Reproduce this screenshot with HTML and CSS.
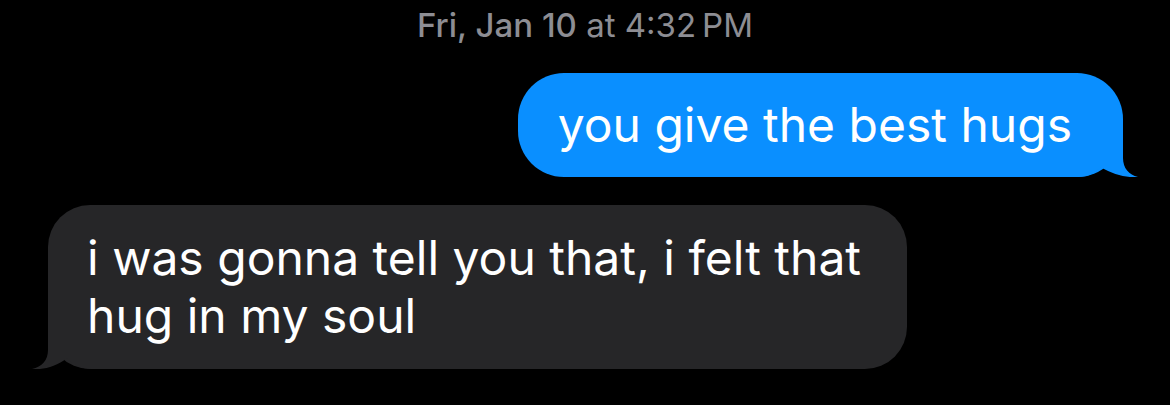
FILE: index.html
```html
<!DOCTYPE html>
<html lang="en">
<head>
  <meta charset="UTF-8">
  <meta name="viewport" content="width=device-width, initial-scale=1.0">
  <title>Messages</title>
  <link rel="stylesheet" href="styles.css">
</head>
<body>
  <div class="thread">
    <div class="timestamp"><span class="day">Fri, Jan 10</span> at 4:32&#8239;PM</div>

    <div class="row row-out">
      <div class="bubble bubble-out">
        <svg class="tail tail-out" width="60" height="50" viewBox="0 0 60 50">
          <path d="M0,0 H45 V31 C45,41 51,48 60,50 C50,51 35,48 23,40 C17,46 10,50 0,50 Z" fill="#0a8fff"/>
        </svg>
        <span class="msg">you give the best hugs</span>
      </div>
    </div>

    <div class="row row-in">
      <div class="bubble bubble-in">
        <svg class="tail tail-in" width="60" height="50" viewBox="0 0 60 50">
          <path d="M60,0 H16 V31 C16,41 10,48 0,50 C10,51 24,48 35,39 C41,46 49,50 60,50 Z" fill="#262628"/>
        </svg>
        <span class="msg">i was gonna tell you that, i felt that<br>hug in my soul</span>
      </div>
    </div>
  </div>
</body>
</html>
```

FILE: styles.css
```css
:root {
  --bg: #000000;
  --blue: #0a8fff;
  --gray-bubble: #262628;
  --meta: #8d8d93;
  --text: #ffffff;
}

* {
  margin: 0;
  padding: 0;
  box-sizing: border-box;
}

body {
  width: 1170px;
  height: 405px;
  background-color: var(--bg);
  font-family: Inter, "Liberation Sans", sans-serif;
  overflow: hidden;
}

.thread {
  display: flex;
  flex-direction: column;
  padding-top: 5px;
}

.timestamp {
  text-align: center;
  font-size: 33px;
  line-height: 40px;
  color: var(--meta);
  margin-bottom: 28px;
}

.day {
  font-weight: 500;
}

.row {
  display: flex;
}

.row-out {
  justify-content: flex-end;
  padding-right: 47px;
  margin-bottom: 28px;
}

.row-in {
  justify-content: flex-start;
  padding-left: 48px;
}

.bubble {
  position: relative;
  font-size: 48px;
  line-height: 58px;
  color: var(--text);
  border-radius: 46px;
}

.bubble-out {
  background-color: var(--blue);
  padding: 23px 51px 23px 40px;
}

.bubble-in {
  background-color: var(--gray-bubble);
  padding: 24px 46px 24px 39px;
  border-radius: 42px;
}

.msg {
  position: relative;
  z-index: 1;
}

.tail {
  position: absolute;
  bottom: 0;
}

.tail-out {
  right: -15px;
}

.tail-in {
  left: -16px;
}
```
